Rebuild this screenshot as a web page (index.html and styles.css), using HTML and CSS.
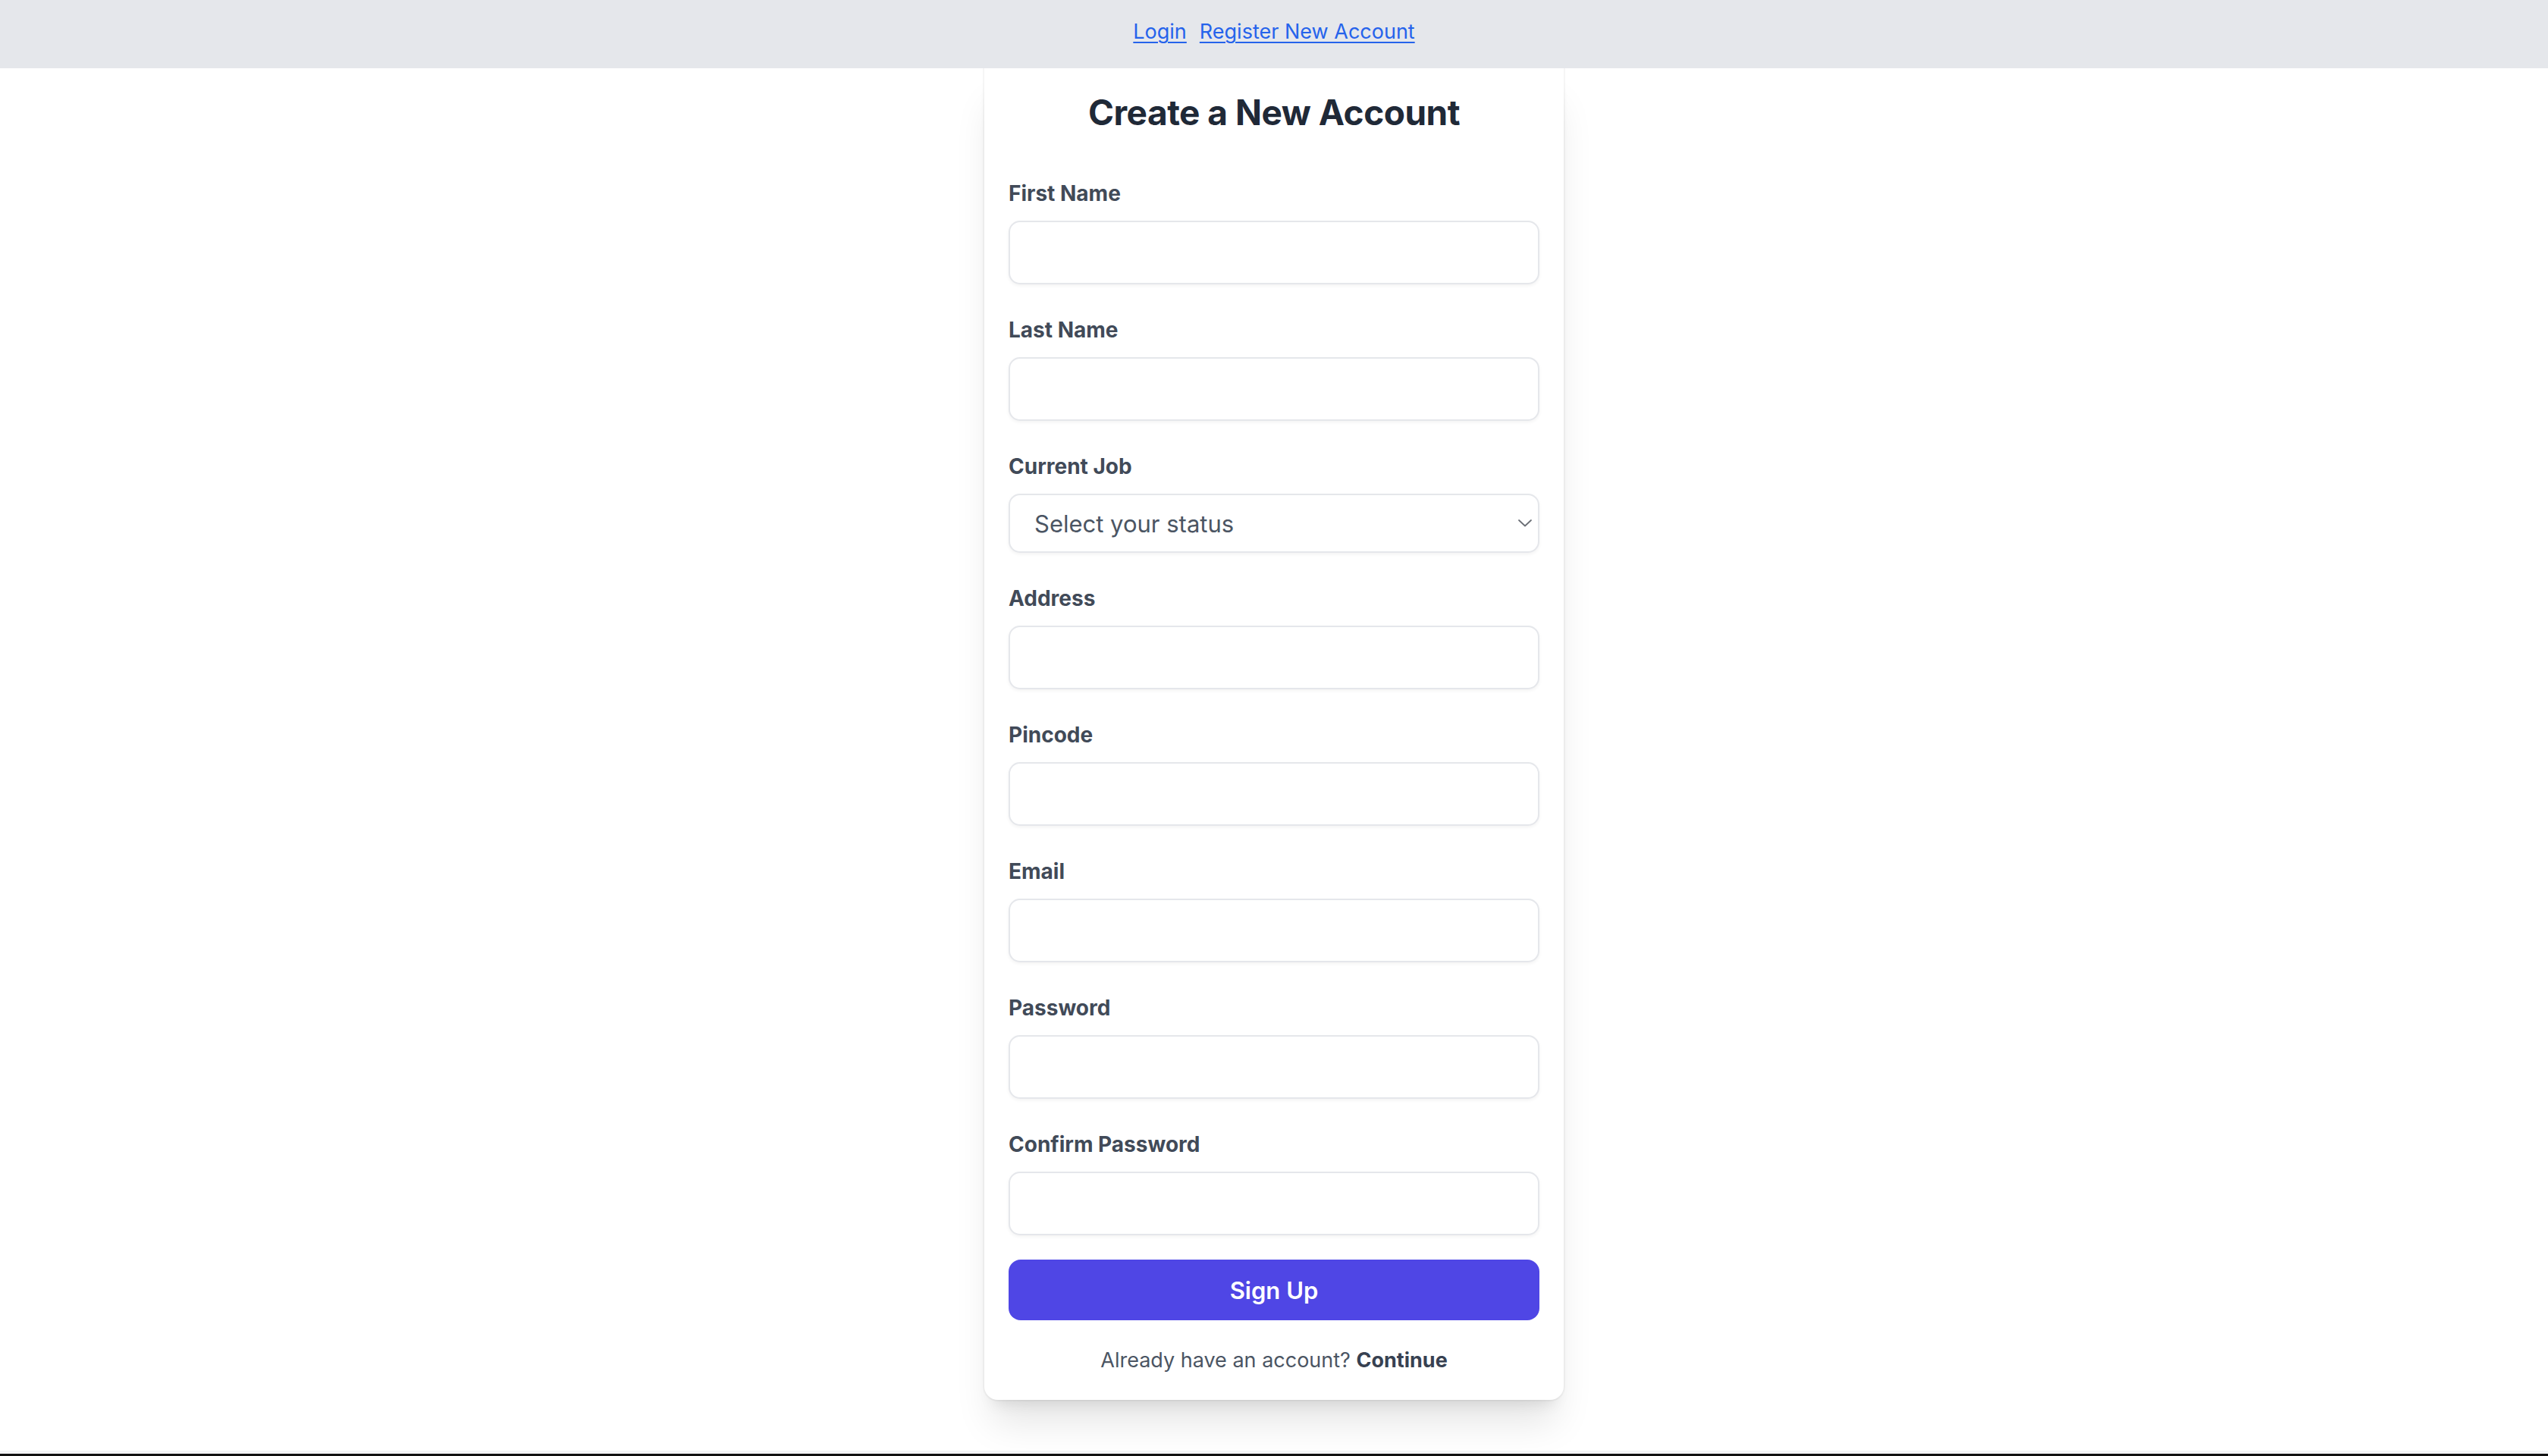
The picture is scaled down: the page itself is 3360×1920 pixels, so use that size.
FILE: index.html
```html
<!DOCTYPE html>
<html lang="en">
<head>
<meta charset="utf-8">
<title>Create a New Account</title>
<link rel="stylesheet" href="styles.css">
</head>
<body>
<div class="page">
  <nav class="topnav">
    <a href="#" class="navlink">Login</a>
    <a href="#" class="navlink">Register New Account</a>
  </nav>
  <main class="main">
    <section class="card">
      <h1 class="title">Create a New Account</h1>
      <form class="form">
        <div class="field">
          <label class="label">First Name</label>
          <div class="input"></div>
        </div>
        <div class="field">
          <label class="label">Last Name</label>
          <div class="input"></div>
        </div>
        <div class="field">
          <label class="label">Current Job</label>
          <div class="select">
            <span class="select-text">Select your status</span>
            <svg class="chevron" width="18" height="10" viewBox="0 0 18 10"><path d="M1 1 L9 8.5 L17 1" fill="none" stroke="#6b6f76" stroke-width="1.8" stroke-linecap="round" stroke-linejoin="round"/></svg>
          </div>
        </div>
        <div class="field">
          <label class="label">Address</label>
          <div class="input"></div>
        </div>
        <div class="field">
          <label class="label">Pincode</label>
          <div class="input"></div>
        </div>
        <div class="field">
          <label class="label">Email</label>
          <div class="input"></div>
        </div>
        <div class="field">
          <label class="label">Password</label>
          <div class="input"></div>
        </div>
        <div class="field field-last">
          <label class="label">Confirm Password</label>
          <div class="input"></div>
        </div>
        <button type="button" class="btn">Sign Up</button>
        <p class="alt">Already have an account? <b class="alt-link">Continue</b></p>
      </form>
    </section>
  </main>
  <div class="bottom-bar"></div>
</div>
</body>
</html>
```

FILE: styles.css
```css
* { box-sizing: border-box; }
html, body { margin: 0; padding: 0; background: #ffffff; }
body { font-family: Inter, "Noto Sans", "Liberation Sans", sans-serif; }

.page {
  display: flex;
  flex-direction: column;
  min-height: 100vh;
}

.topnav {
  height: 90px;
  background: #e5e7eb;
  display: flex;
  justify-content: center;
  align-items: center;
  gap: 17px;
  padding-bottom: 6px;
  position: relative;
  z-index: 2;
}
.navlink {
  font-size: 27px;
  line-height: 40px;
  color: #2563eb;
  text-decoration: underline;
  text-underline-offset: 4px;
  text-decoration-thickness: 2px;
}

.main {
  display: flex;
  justify-content: center;
}

.card {
  width: 764px;
  background: #ffffff;
  border-radius: 0 0 18px 18px;
  padding: 26px 32px 32px;
  box-shadow: 0 0 0 2px rgba(0,0,0,0.035), 0 40px 50px -10px rgba(0,0,0,0.10), 0 16px 20px -12px rgba(0,0,0,0.10);
}

.title {
  margin: 0 0 55px;
  font-size: 46px;
  line-height: 64px;
  font-weight: 700;
  color: #1f2937;
  text-align: center;
  letter-spacing: -0.5px;
}

.form {
  display: flex;
  flex-direction: column;
}

.field {
  display: flex;
  flex-direction: column;
  gap: 16px;
  margin-bottom: 40px;
}
.field-last { margin-bottom: 32px; }

.label {
  font-size: 28px;
  line-height: 40px;
  font-weight: 700;
  color: #414a58;
}

.input {
  height: 84px;
  border: 2px solid #e5e7eb;
  border-radius: 15px;
  background: #ffffff;
  box-shadow: 0 2px 4px rgba(0,0,0,0.05);
}

.select {
  height: 78px;
  border: 2px solid #e5e7eb;
  border-radius: 15px;
  background: #ffffff;
  box-shadow: 0 2px 4px rgba(0,0,0,0.05);
  display: flex;
  align-items: center;
  justify-content: space-between;
  padding: 0 8px 0 32px;
}
.select-text {
  font-size: 31px;
  color: #4b5563;
}
.chevron { display: block; }

.btn {
  height: 80px;
  border: none;
  border-radius: 16px;
  background: #4f46e5;
  color: #ffffff;
  font-family: inherit;
  font-size: 31px;
  font-weight: 600;
  cursor: pointer;
}

.alt {
  margin: 33px 0 0;
  font-size: 27px;
  line-height: 40px;
  text-align: center;
  color: #4b5563;
}
.alt-link {
  font-weight: 700;
  color: #374151;
}

.bottom-bar {
  margin-top: auto;
  height: 7px;
  border-top: 4px solid #f3f4f6;
  background: #111111;
}
```
